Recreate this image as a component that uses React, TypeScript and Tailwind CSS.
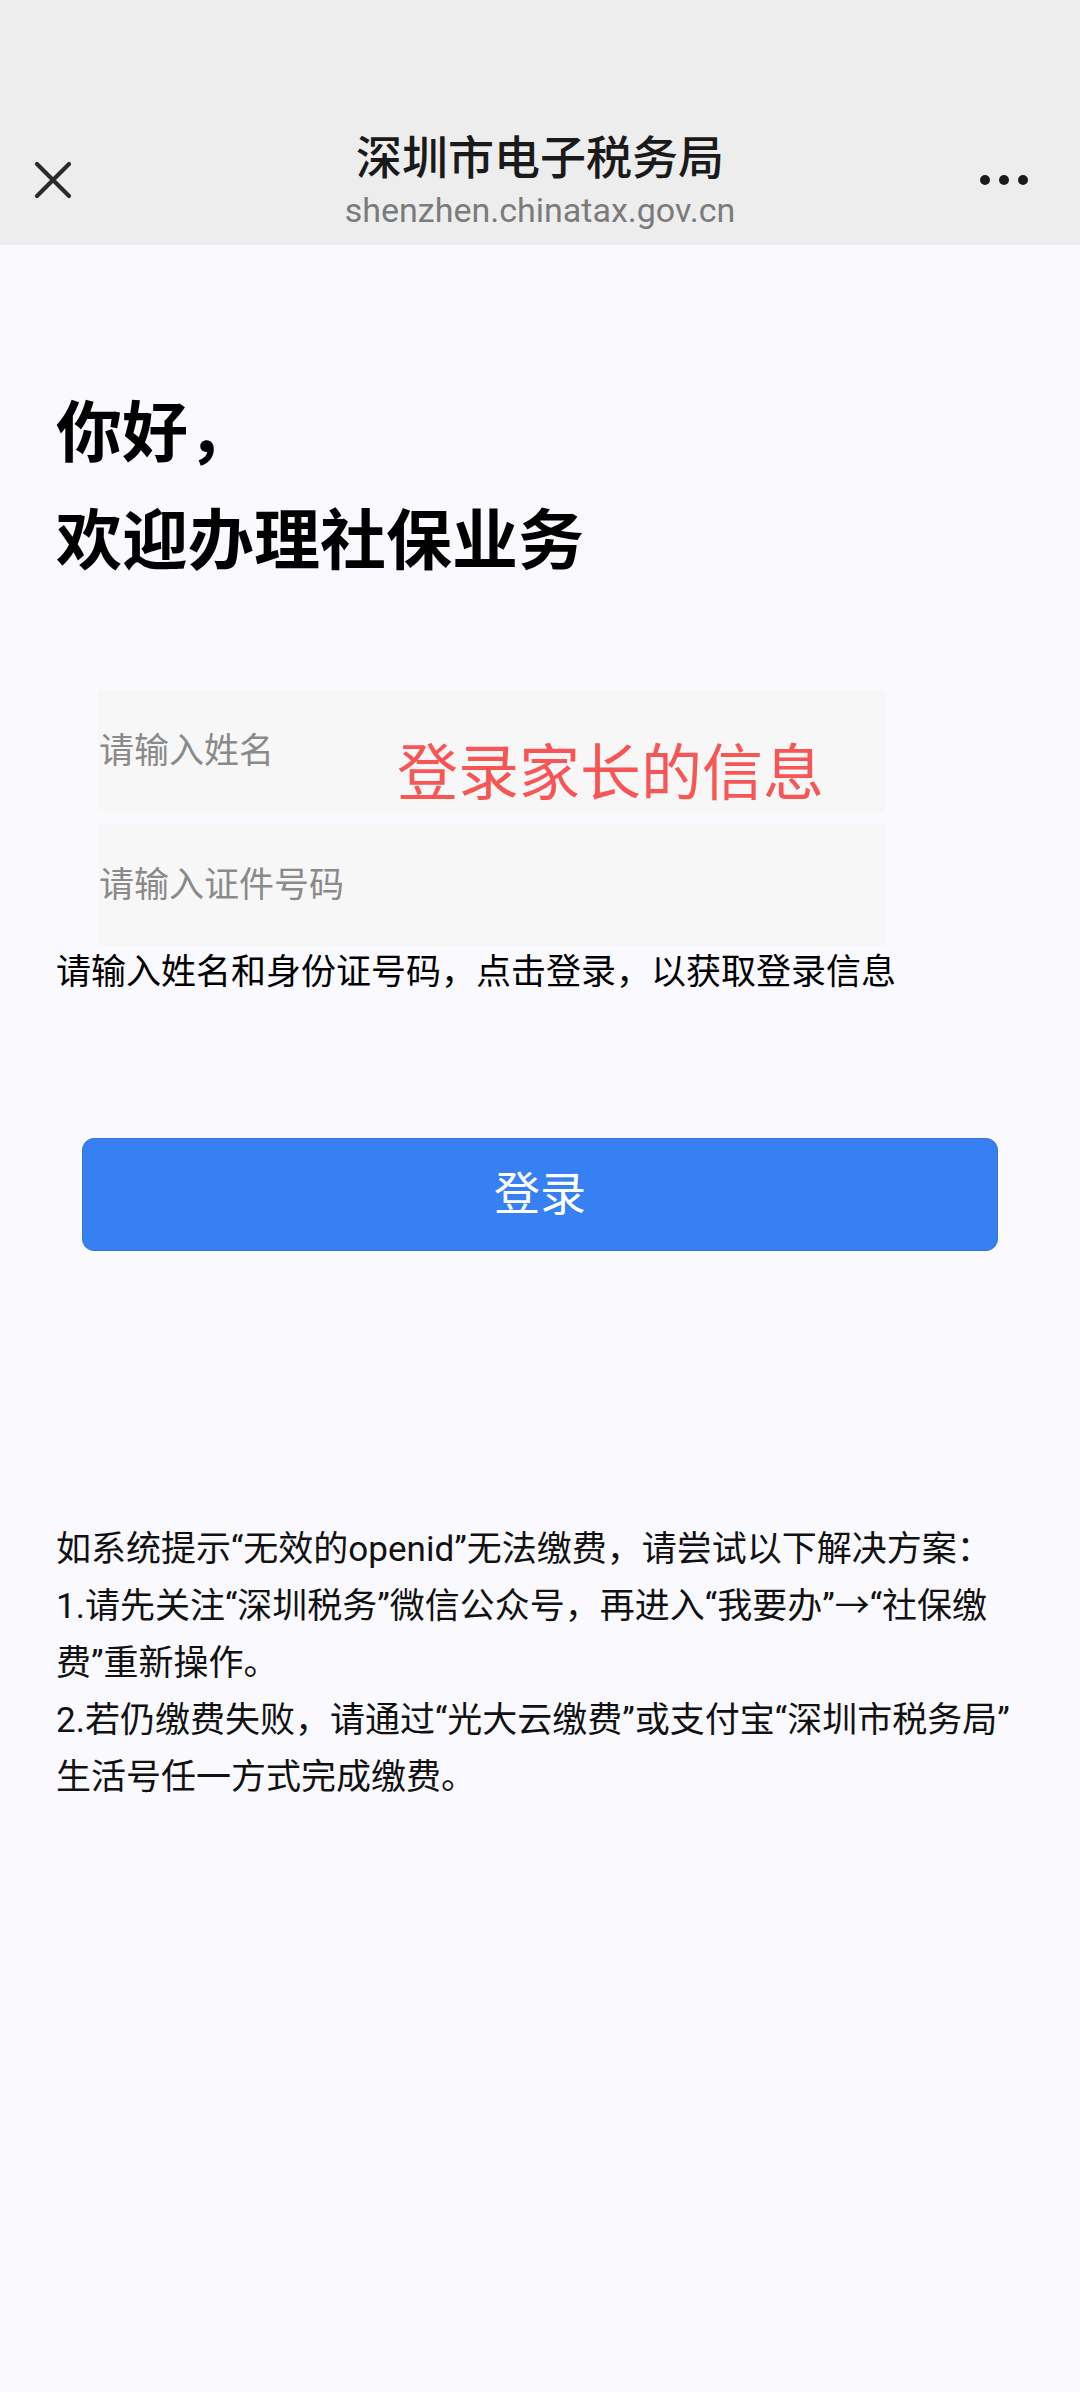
import React from "react";

const FONT = "font-['Roboto','Noto_Sans_CJK_SC',sans-serif]";

const CloseIcon = () => (
  <svg width="38" height="38" viewBox="0 0 38 38" fill="none">
    <path
      d="M3 3 L35 35 M35 3 L3 35"
      stroke="#2b2b2b"
      strokeWidth="4.2"
      strokeLinecap="round"
    />
  </svg>
);

const MoreDots = () => (
  <div className="flex items-center gap-[9px]">
    <span className="block w-[10px] h-[10px] rounded-full bg-[#1c1c1c]" />
    <span className="block w-[10px] h-[10px] rounded-full bg-[#1c1c1c]" />
    <span className="block w-[10px] h-[10px] rounded-full bg-[#1c1c1c]" />
  </div>
);

const Header = () => (
  <div className="h-[245px] bg-[#ededed] pt-[129px]">
    <div className="grid grid-cols-[1fr_auto_1fr] items-center">
      <div className="pl-[34px] flex">
        <CloseIcon />
      </div>
      <div className="flex flex-col items-center">
        <p className="text-[46px] leading-[58px] font-medium text-[#1a1a1a]">深圳市电子税务局</p>
        <p className="mt-[3px] text-[34px] leading-[40px] text-[#7b7b7b]">
          shenzhen.chinatax.gov.cn
        </p>
      </div>
      <div className="pr-[52px] flex justify-end">
        <MoreDots />
      </div>
    </div>
  </div>
);

const App = () => {
  return (
    <div className={`w-full min-h-[2392px] bg-[#faf9fe] text-black ${FONT}`}>
      <Header />
      <div className="px-[56px]">
        <h1 className="mt-[135px] text-[66px] leading-[108px] font-bold">
          你好，
          <br />
          欢迎办理社保业务
        </h1>

        <div className="mt-[94px] ml-[42px] w-[787px] flex flex-col gap-[12px]">
          <div className="relative">
            <input
              className="w-full h-[122px] bg-[#f7f7f7] pl-[1px] text-[35px] outline-none placeholder:text-[#8a8a8a]"
              placeholder="请输入姓名"
            />
            {/* annotation drawn over the input */}
            <span className="absolute left-[299px] top-[54px] text-[61px] leading-[61px] text-[#f85555] whitespace-nowrap pointer-events-none">
              登录家长的信息
            </span>
          </div>
          <input
            className="w-full h-[122px] bg-[#f7f7f7] pl-[1px] text-[35px] outline-none placeholder:text-[#8a8a8a]"
            placeholder="请输入证件号码"
          />
        </div>

        <p className="mt-[2px] text-[35px] leading-[49px] whitespace-nowrap">
          请输入姓名和身份证号码，点击登录，以获取登录信息
        </p>

        <button className="mt-[141px] mx-[26px] w-[916px] h-[113px] rounded-[12px] bg-[#3780f4] border border-[#3a74d2] text-white text-[46px]">
          登录
        </button>

        <div className="mt-[270px] text-[35px] leading-[57px] text-[#111]">
          <p className="whitespace-nowrap">如系统提示“无效的openid”无法缴费，请尝试以下解决方案：</p>
          <p className="whitespace-nowrap">1.请先关注“深圳税务”微信公众号，再进入“我要办”→“社保缴</p>
          <p className="whitespace-nowrap">费”重新操作。</p>
          <p className="whitespace-nowrap">2.若仍缴费失败，请通过“光大云缴费”或支付宝“深圳市税务局”</p>
          <p className="whitespace-nowrap">生活号任一方式完成缴费。</p>
        </div>
      </div>
    </div>
  );
};

export default App;
